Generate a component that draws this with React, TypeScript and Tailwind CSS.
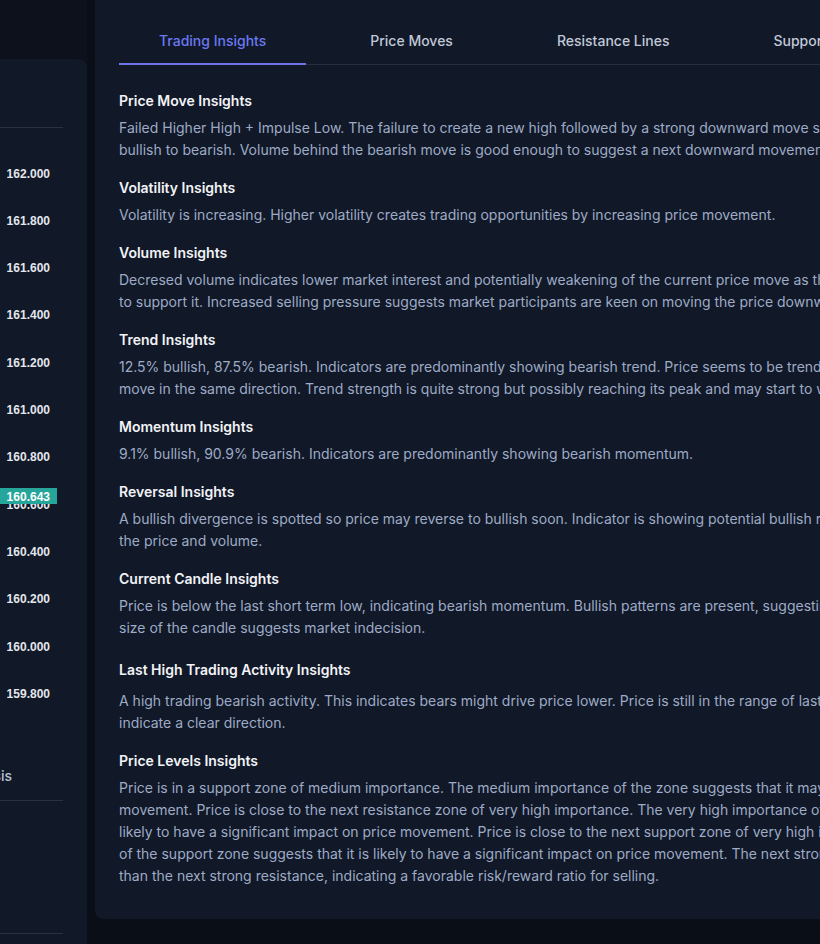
import React from "react";

const tabs = ["Trading Insights", "Price Moves", "Resistance Lines", "Support Lines", "Patterns"];

type Insight = { title: string; lines: string[]; spaced?: boolean };

const insights: Insight[] = [
	{
		title: "Price Move Insights",
		lines: [
			"Failed Higher High + Impulse Low. The failure to create a new high followed by a strong downward move suggests a shift from",
			"bullish to bearish. Volume behind the bearish move is good enough to suggest a next downward movement.",
		],
	},
	{
		title: "Volatility Insights",
		lines: ["Volatility is increasing. Higher volatility creates trading opportunities by increasing price movement."],
	},
	{
		title: "Volume Insights",
		lines: [
			"Decresed volume indicates lower market interest and potentially weakening of the current price move as there is less volume",
			"to support it. Increased selling pressure suggests market participants are keen on moving the price downwards.",
		],
	},
	{
		title: "Trend Insights",
		lines: [
			"12.5% bullish, 87.5% bearish. Indicators are predominantly showing bearish trend. Price seems to be trending and is likely to",
			"move in the same direction. Trend strength is quite strong but possibly reaching its peak and may start to weaken.",
		],
	},
	{
		title: "Momentum Insights",
		lines: ["9.1% bullish, 90.9% bearish. Indicators are predominantly showing bearish momentum."],
	},
	{
		title: "Reversal Insights",
		lines: [
			"A bullish divergence is spotted so price may reverse to bullish soon. Indicator is showing potential bullish reversal based on",
			"the price and volume.",
		],
	},
	{
		title: "Current Candle Insights",
		lines: [
			"Price is below the last short term low, indicating bearish momentum. Bullish patterns are present, suggesting a reversal. The",
			"size of the candle suggests market indecision.",
		],
	},
	{
		title: "Last High Trading Activity Insights",
		spaced: true,
		lines: [
			"A high trading bearish activity. This indicates bears might drive price lower. Price is still in the range of last activity, not",
			"indicate a clear direction.",
		],
	},
	{
		title: "Price Levels Insights",
		lines: [
			"Price is in a support zone of medium importance. The medium importance of the zone suggests that it may impact price",
			"movement. Price is close to the next resistance zone of very high importance. The very high importance of the zone is",
			"likely to have a significant impact on price movement. Price is close to the next support zone of very high importance.",
			"of the support zone suggests that it is likely to have a significant impact on price movement. The next strong support is further",
			"than the next strong resistance, indicating a favorable risk/reward ratio for selling.",
		],
	},
];

const prices = ["162.000", "161.800", "161.600", "161.400", "161.200", "161.000", "160.800", "160.600", "160.400", "160.200", "160.000", "159.800"];

function PriceAxis() {
	return (
		<svg width="66" height="620" className="shrink-0">
			{prices.map((p, i) => (
				<text
					key={p}
					x="53"
					y={45.5 + i * 47.333}
					textAnchor="end"
					dominantBaseline="central"
					fill="#e3e6ec"
					fontSize="12"
					fontWeight="700"
					fontFamily="'Liberation Sans', Arial, sans-serif"
				>
					{p}
				</text>
			))}
			<rect x="0" y="360" width="60" height="16" fill="#26a69a" />
			<text
				x="53"
				y="368.5"
				textAnchor="end"
				dominantBaseline="central"
				fill="#ffffff"
				fontSize="12"
				fontWeight="700"
				fontFamily="'Liberation Sans', Arial, sans-serif"
			>
				160.643
			</text>
		</svg>
	);
}

function ChartCard() {
	return (
		<div className="-ml-[273px] mt-[59px] h-[900px] w-[360px] rounded-tr-lg bg-[#111827]">
			<div className="mx-6 h-[69px] border-b border-[#283041]" />
			<div className="mx-6 flex h-[673px] flex-col border-b border-[#283041]">
				<div className="flex h-[620px]">
					<div className="flex-1" />
					<PriceAxis />
				</div>
				<div className="flex flex-1 items-center justify-end pr-[51px] pt-1 text-sm font-medium text-[#b9c3d6]">
					Technical Analysis
				</div>
			</div>
			<div className="mx-6 h-[133px] border-b border-[#283041]" />
		</div>
	);
}

function InsightsCard() {
	return (
		<div className="rounded-b-lg bg-[#111827] px-6 pb-8 pt-[19px]">
			<div className="flex gap-6 border-b border-[#262e3f]">
				{tabs.map((t, i) => (
					<button
						key={t}
						className={
							i === 0
								? "-mb-px border-b-2 border-[#6d74ec] px-10 pb-3 pt-3 text-sm font-medium leading-5 text-[#6b78f2]"
								: "-mb-px border-b-2 border-transparent px-10 pb-3 pt-3 text-sm font-medium leading-5 text-[#c0c8d8]"
						}
					>
						{t}
					</button>
				))}
			</div>
			<div className="mt-[26px] flex flex-col gap-[17px]">
				{insights.map((s) => (
					<section key={s.title} className={s.spaced ? "mt-1" : ""}>
						<h3 className="text-sm font-semibold leading-5 text-[#f1f3f7]">{s.title}</h3>
						<p className={(s.spaced ? "mt-2.5" : "mt-1.5") + " text-sm leading-[22px] text-[#9eabc6]"}>
							{s.lines.map((l, i) => (
								<span key={i} className="block whitespace-nowrap">
									{l}
								</span>
							))}
						</p>
					</section>
				))}
			</div>
		</div>
	);
}

export default function App() {
	return (
		<div className="flex h-[944px] w-full overflow-hidden bg-[#0a0e16] font-['Inter',sans-serif]">
			<div className="flex w-[87px] shrink-0 flex-col bg-[#0c111b]">
				<ChartCard />
			</div>
			<div className="ml-2 w-[1000px] shrink-0">
				<InsightsCard />
			</div>
		</div>
	);
}
